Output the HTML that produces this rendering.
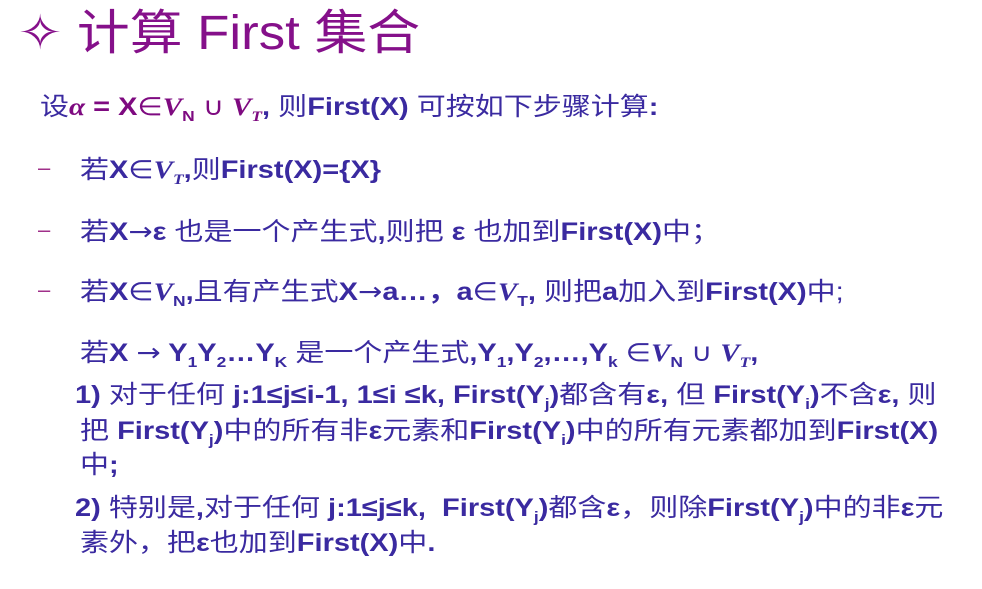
<!DOCTYPE html><html><head><meta charset="utf-8"><style>
body{margin:0;width:982px;height:589px;background:#fff;overflow:hidden;position:relative;font-family:"Liberation Sans","Noto Sans CJK SC",sans-serif;}
.l{position:absolute;white-space:nowrap;font-size:25px;font-weight:bold;color:#3a2aa0;line-height:30px;transform:scaleX(1.16);transform-origin:0 0}
.c{font-weight:normal}
.p{color:#7e0a80}
i{font-family:"Liberation Serif",serif}
.a{font-family:"DejaVu Sans",sans-serif;font-weight:normal}
sub{font-size:15px;vertical-align:-6px;line-height:0}
.d{position:absolute;color:#a0308a;font-size:22px;left:38px}
</style></head><body>
<div class="l" style="left:18px;top:6px;font-size:48px;line-height:56px;font-weight:normal;color:#85108a;transform:scaleX(1.1)">✧ 计算 First 集合</div>
<div class="l" style="left:40px;top:92px"><span class="c">设</span><span class="p"><i>α</i> = X<span class="a">∈</span><i>V</i><sub>N</sub> <span class="a">∪</span> <i>V</i><sub><i>T</i></sub></span>, <span class="c">则</span>First(X) <span class="c">可按如下步骤计算</span>:</div>
<div class="d" style="top:155px">–</div>
<div class="l" style="left:80px;top:155px"><span class="c">若</span>X<span class="a">∈</span><i>V</i><sub><i>T</i></sub>,<span class="c">则</span>First(X)={X}</div>
<div class="d" style="top:217px">–</div>
<div class="l" style="left:80px;top:217px"><span class="c">若</span>X<span class="a">→</span>ε <span class="c">也是一个产生式</span>,<span class="c">则把</span> ε <span class="c">也加到</span>First(X)<span class="c">中；</span></div>
<div class="d" style="top:277px">–</div>
<div class="l" style="left:80px;top:277px"><span class="c">若</span>X<span class="a">∈</span><i>V</i><sub>N</sub>,<span class="c">且有产生式</span>X<span class="a">→</span>a…，a<span class="a">∈</span><i>V</i><sub>T</sub>, <span class="c">则把</span>a<span class="c">加入到</span>First(X)<span class="c">中;</span></div>
<div class="l" style="left:80px;top:338px"><span class="c">若</span>X <span class="a">→</span> Y<sub>1</sub>Y<sub>2</sub>…Y<sub>K</sub> <span class="c">是一个产生式</span>,Y<sub>1</sub>,Y<sub>2</sub>,…,Y<sub>k</sub> <span class="a">∈</span><i>V</i><sub>N</sub> <span class="a">∪</span> <i>V</i><sub><i>T</i></sub>,</div>
<div class="l" style="left:75px;top:380px">1) <span class="c">对于任何</span> j:1≤j≤i-1, 1≤i ≤k, First(Y<sub>j</sub>)<span class="c">都含有</span>ε, <span class="c">但</span> First(Y<sub>i</sub>)<span class="c">不含</span>ε, <span class="c">则</span></div>
<div class="l" style="left:80px;top:416px"><span class="c">把</span> First(Y<sub>j</sub>)<span class="c">中的所有非</span>ε<span class="c">元素和</span>First(Y<sub>i</sub>)<span class="c">中的所有元素都加到</span>First(X)</div>
<div class="l" style="left:80px;top:450px"><span class="c">中</span>;</div>
<div class="l" style="left:75px;top:493px">2) <span class="c">特别是</span>,<span class="c">对于任何</span> j:1≤j≤k, &nbsp;First(Y<sub>j</sub>)<span class="c">都含</span>ε<span class="c">，则除</span>First(Y<sub>j</sub>)<span class="c">中的非</span>ε<span class="c">元</span></div>
<div class="l" style="left:80px;top:528px"><span class="c">素外，把</span>ε<span class="c">也加到</span>First(X)<span class="c">中</span>.</div>
</body></html>
